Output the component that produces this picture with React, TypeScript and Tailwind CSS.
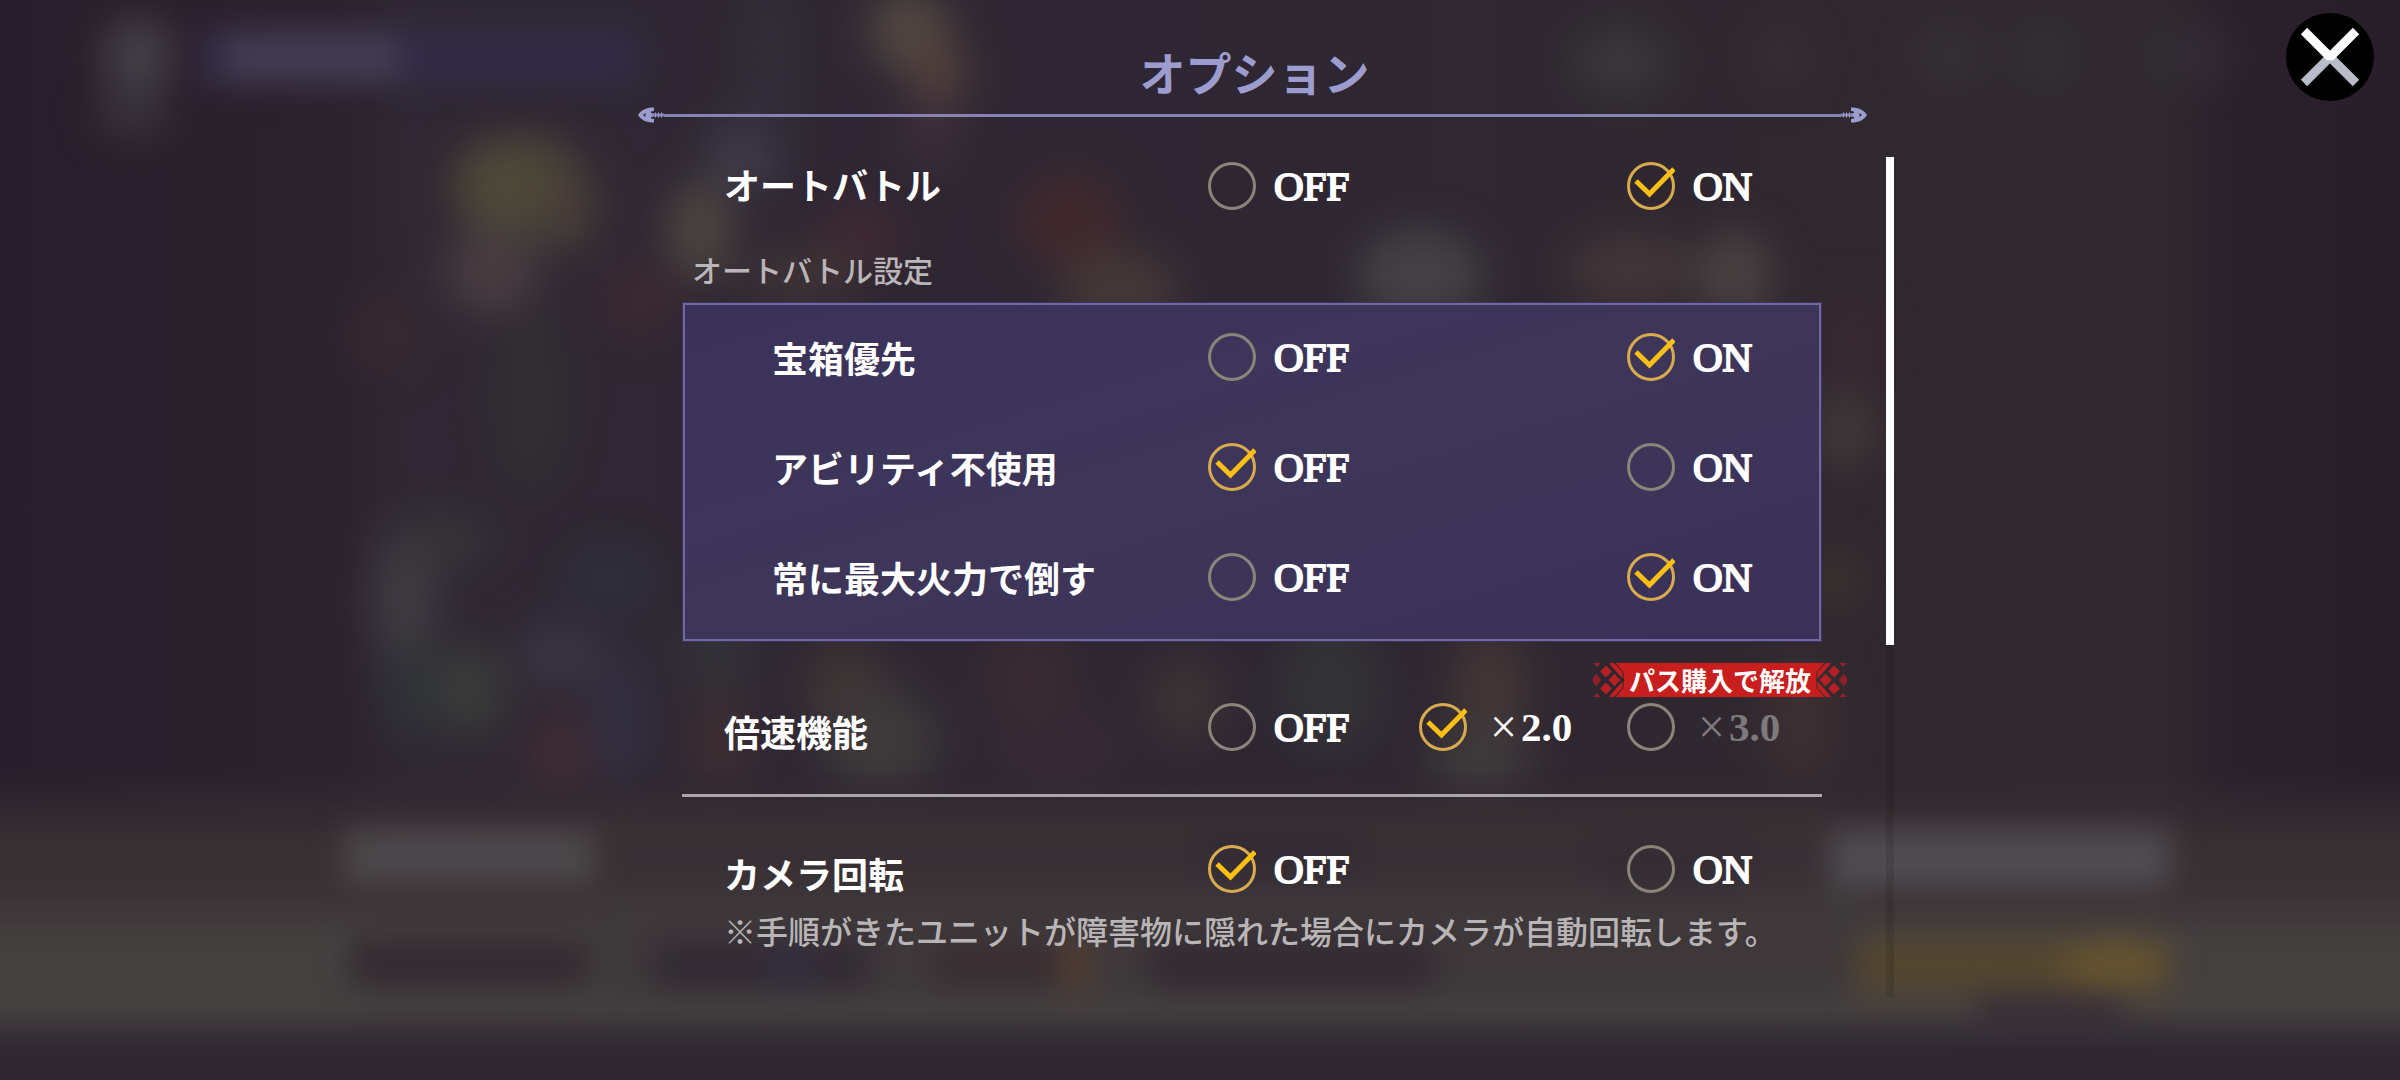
import type { ReactNode } from "react";

type Choice = { value: string; column: string; disabled?: boolean; times?: boolean };

const LATIN = "font-['Liberation_Serif','Noto_Sans_CJK_JP',serif]";
const JAPANESE = "font-['Noto_Sans_CJK_JP','Liberation_Serif',sans-serif]";

const OFF_ON: Choice[] = [
  { value: "OFF", column: "col-start-2" },
  { value: "ON", column: "col-start-4" },
];

const SPEEDS: Choice[] = [
  { value: "OFF", column: "col-start-2" },
  { value: "2.0", column: "col-start-3", times: true },
  { value: "3.0", column: "col-start-4", times: true, disabled: true },
];

const BLOBS: { x: number; y: number; rx: number; ry: number; fill: string }[] = [
  { x: 138, y: 54, rx: 36, ry: 34, fill: "#4b464d" },
  { x: 132, y: 112, rx: 38, ry: 24, fill: "#3b353d" },
  { x: 520, y: 185, rx: 70, ry: 50, fill: "#524c39" },
  { x: 572, y: 205, rx: 26, ry: 50, fill: "#4b403a" },
  { x: 492, y: 270, rx: 50, ry: 46, fill: "#4a3e42" },
  { x: 385, y: 335, rx: 34, ry: 38, fill: "#3a292f" },
  { x: 530, y: 400, rx: 34, ry: 90, fill: "#343032" },
  { x: 405, y: 600, rx: 32, ry: 84, fill: "#423e44" },
  { x: 445, y: 540, rx: 50, ry: 28, fill: "#39353a" },
  { x: 470, y: 690, rx: 38, ry: 48, fill: "#3b3d3a" },
  { x: 410, y: 690, rx: 28, ry: 48, fill: "#303539" },
  { x: 560, y: 655, rx: 44, ry: 32, fill: "#3d3646" },
  { x: 560, y: 755, rx: 32, ry: 44, fill: "#432d35" },
  { x: 620, y: 720, rx: 24, ry: 64, fill: "#353347" },
  { x: 610, y: 580, rx: 48, ry: 38, fill: "#2f2f3c" },
  { x: 640, y: 300, rx: 44, ry: 40, fill: "#3d2932" },
  { x: 700, y: 230, rx: 34, ry: 50, fill: "#4f4942" },
  { x: 745, y: 155, rx: 40, ry: 38, fill: "#423c4b" },
  { x: 770, y: 60, rx: 30, ry: 90, fill: "#322f3a" },
  { x: 910, y: 30, rx: 42, ry: 42, fill: "#564b43" },
  { x: 938, y: 74, rx: 30, ry: 40, fill: "#56433d" },
  { x: 930, y: 135, rx: 28, ry: 38, fill: "#3f2e3c" },
  { x: 860, y: 235, rx: 44, ry: 34, fill: "#412933" },
  { x: 800, y: 275, rx: 64, ry: 28, fill: "#403536" },
  { x: 1070, y: 220, rx: 56, ry: 50, fill: "#42292d" },
  { x: 1120, y: 290, rx: 60, ry: 40, fill: "#473a38" },
  { x: 1420, y: 275, rx: 64, ry: 46, fill: "#494449" },
  { x: 1630, y: 270, rx: 64, ry: 38, fill: "#443739" },
  { x: 1735, y: 275, rx: 38, ry: 44, fill: "#4d4544" },
  { x: 1620, y: 62, rx: 50, ry: 34, fill: "#3d393c" },
  { x: 1782, y: 58, rx: 26, ry: 32, fill: "#383034" },
  { x: 1950, y: 55, rx: 34, ry: 28, fill: "#383338" },
  { x: 2045, y: 55, rx: 26, ry: 28, fill: "#37323a" },
  { x: 2190, y: 55, rx: 44, ry: 28, fill: "#342d36" },
  { x: 1845, y: 430, rx: 28, ry: 40, fill: "#453c3c" },
  { x: 1850, y: 340, rx: 28, ry: 50, fill: "#3a2830" },
  { x: 1835, y: 580, rx: 20, ry: 28, fill: "#40382f" },
  { x: 720, y: 740, rx: 32, ry: 54, fill: "#402f33" },
  { x: 715, y: 655, rx: 44, ry: 34, fill: "#343339" },
  { x: 845, y: 690, rx: 44, ry: 50, fill: "#403634" },
  { x: 880, y: 740, rx: 60, ry: 54, fill: "#403b3c" },
  { x: 1030, y: 680, rx: 48, ry: 54, fill: "#3b2b32" },
  { x: 1060, y: 750, rx: 64, ry: 40, fill: "#382a35" },
  { x: 1185, y: 700, rx: 40, ry: 44, fill: "#3f3536" },
  { x: 1330, y: 690, rx: 54, ry: 64, fill: "#343438" },
  { x: 1490, y: 690, rx: 38, ry: 60, fill: "#453836" },
  { x: 1480, y: 760, rx: 54, ry: 40, fill: "#403b3d" },
  { x: 1800, y: 720, rx: 38, ry: 64, fill: "#3f3033" },
];

const BARS = [
  { x: 200, y: 28, w: 440, h: 58, fill: "#332b45" },
  { x: 225, y: 34, w: 175, h: 46, fill: "#443c52" },
  { x: 345, y: 830, w: 250, h: 54, fill: "#4d484c" },
  { x: 1830, y: 830, w: 340, h: 58, fill: "#504c51" },
  { x: 350, y: 936, w: 240, h: 54, fill: "#342c32" },
  { x: 655, y: 940, w: 215, h: 50, fill: "#332b34" },
  { x: 935, y: 942, w: 140, h: 46, fill: "#392e32" },
  { x: 1150, y: 936, w: 285, h: 56, fill: "#342c33" },
  { x: 1200, y: 830, w: 160, h: 50, fill: "#332c34" },
  { x: 1590, y: 838, w: 160, h: 50, fill: "#342d34" },
  { x: 1855, y: 938, w: 315, h: 54, fill: "#54462f" },
  { x: 1975, y: 996, w: 150, h: 30, fill: "#352b36" },
];

function Backdrop() {
  return (
    <svg
      aria-hidden="true"
      className="absolute inset-0 h-full w-full"
      viewBox="0 0 2400 1080"
      preserveAspectRatio="none"
    >
      <defs>
        <linearGradient id="base" x1="0" x2="1" y1="0" y2="0">
          <stop offset="0" stopColor="#281e2c" />
          <stop offset="0.14" stopColor="#2c222e" />
          <stop offset="0.17" stopColor="#2f2733" />
          <stop offset="0.5" stopColor="#2e2632" />
          <stop offset="0.78" stopColor="#30282f" />
          <stop offset="0.9" stopColor="#30292f" />
          <stop offset="0.93" stopColor="#2b202c" />
          <stop offset="1" stopColor="#281e2a" />
        </linearGradient>
        <linearGradient id="floor" x1="0" x2="0" y1="0" y2="1">
          <stop offset="0" stopColor="#352c32" stopOpacity="0" />
          <stop offset="0.22" stopColor="#382f33" />
          <stop offset="0.4" stopColor="#3b3235" />
          <stop offset="0.55" stopColor="#454040" />
          <stop offset="0.76" stopColor="#464140" />
          <stop offset="0.9" stopColor="#2f2733" />
          <stop offset="1" stopColor="#2e2531" />
        </linearGradient>
        <filter id="soft" x="-5%" y="-20%" width="110%" height="140%" colorInterpolationFilters="sRGB">
          <feGaussianBlur stdDeviation="21" />
        </filter>
        <filter id="softBar" x="-5%" y="-20%" width="110%" height="140%" colorInterpolationFilters="sRGB">
          <feGaussianBlur stdDeviation="15" />
        </filter>
      </defs>
      <rect width="2400" height="1080" fill="url(#base)" />
      <g filter="url(#soft)" opacity="0.9">
        {BLOBS.map((b, i) => (
          <ellipse key={i} cx={b.x} cy={b.y} rx={b.rx} ry={b.ry} fill={b.fill} />
        ))}
      </g>
      <rect y="770" width="2400" height="310" fill="url(#floor)" />
      <g filter="url(#softBar)">
        <rect x="600" y="810" width="1230" height="90" fill="#383034" />
        <rect x="600" y="890" width="1260" height="110" fill="#3e383b" />
        {BARS.map((b, i) => (
          <rect key={i} x={b.x} y={b.y} width={b.w} height={b.h} fill={b.fill} />
        ))}
        <ellipse cx="2115" cy="965" rx="54" ry="26" fill="#655330" />
        <ellipse cx="1075" cy="965" rx="16" ry="28" fill="#553f31" />
        <ellipse cx="790" cy="965" rx="26" ry="20" fill="#332d40" />
      </g>
    </svg>
  );
}

function ArrowTip({ className = "" }: { className?: string }) {
  return (
    <svg aria-hidden="true" viewBox="0 0 26 16" className={"h-4 w-[26px] shrink-0 " + className}>
      <path
        fill="#9d9ccf"
        fillRule="evenodd"
        d="M0 8C3 3 8 .5 16 .5V4L13 4.500V6L16 6.500V9.500L13 10V11.500L16 12V15.500C8 15.500 3 13 0 8ZM5 8 7.500 10V6Z"
      />
      <path fill="#8582b4" d="M14 6.500h12v3H14z" />
      <path fill="#9d9ccf" d="M17 5.500h1v5h-1zM20 5.500h1v5h-1zM23 5.500h1v5h-1z" />
    </svg>
  );
}

function BadgeEnd({ className = "" }: { className?: string }) {
  return (
    <svg aria-hidden="true" viewBox="0 0 34 34" className={"size-[34px] shrink-0 " + className}>
      <path fill="#8f2127" d="M3 11 8.500 17 3 23 0 19V15ZM0 0H8L4 4ZM0 34H8L4 30Z" />
      <path fill="#b32025" d="M13 2.500 19 8.500 13 14.500 7 8.500ZM13 19.500 19 25.500 13 31.500 7 25.500Z" />
      <path fill="#b92024" d="M21.500 11 27.500 17 21.500 23 15.500 17Z" />
      <path fill="#c11f22" d="M16 0H21L29.500 9V15.500L23 8.500ZM16 34H21L29.500 25V18.500L23 25.500Z" />
      <path fill="#c81e1e" d="M22.500 0H35V34H22.500L30.500 25V18.500L31.500 17 30.500 15.500V9Z" />
    </svg>
  );
}

function PassBadge() {
  return (
    <span className="absolute -top-[13px] -left-[34px] flex h-[34px]">
      <BadgeEnd />
      <span
        className={`${JAPANESE} bg-[#c81e1e] px-0.5 text-[26px] leading-[34px] font-bold whitespace-nowrap text-white`}
      >
        パス購入で解放
      </span>
      <BadgeEnd className="-scale-x-100" />
    </span>
  );
}

function Radio({ name, choice, checked }: { name: string; choice: Choice; checked: boolean }) {
  return (
    <label className={`${LATIN} flex items-center gap-[18px] text-[41px] leading-none text-white`}>
      <span className="relative size-12 shrink-0">
        <input
          type="radio"
          name={name}
          value={choice.value}
          defaultChecked={checked}
          disabled={choice.disabled}
          className="peer block size-12 appearance-none rounded-full border-3 border-[#8a8579] checked:border-[#d8ab4e]"
        />
        <svg
          aria-hidden="true"
          viewBox="0 0 48 48"
          className="pointer-events-none absolute inset-0 hidden size-12 peer-checked:block"
        >
          <path d="M9 19 22.500 32 47 7" fill="none" stroke="#fcc015" strokeWidth="5" />
        </svg>
      </span>
      {choice.times ? (
        <span className={choice.disabled ? "flex items-center text-[#7d797d]" : "flex items-center"}>
          <span className="w-8 text-right text-[48px]">×</span>
          <span className="pl-1 font-bold">{choice.value}</span>
        </span>
      ) : (
        <span className="[-webkit-text-stroke:2px_white]">{choice.value}</span>
      )}
    </label>
  );
}

function OptionRow({
  label,
  name,
  value,
  choices = OFF_ON,
  labelClass,
  rowClass,
  badge,
}: {
  label: string;
  name: string;
  value: string;
  choices?: Choice[];
  labelClass: string;
  rowClass: string;
  badge?: ReactNode;
}) {
  return (
    <div
      role="radiogroup"
      aria-label={label}
      className={"grid grid-cols-[526fr_211fr_208fr_195fr] items-center " + rowClass}
    >
      <span className={`${JAPANESE} text-[36px] leading-none font-bold whitespace-nowrap text-white ${labelClass}`}>
        {label}
      </span>
      {choices.map((c) => (
        <div key={c.value} className={`row-start-1 flex h-full items-center whitespace-nowrap ${c.column} ${c.disabled ? "relative" : ""}`}>
          <Radio name={name} choice={c} checked={c.value === value} />
          {c.disabled && badge}
        </div>
      ))}
    </div>
  );
}

export default function App() {
  return (
    <div className="relative min-h-screen overflow-hidden bg-[#2d2531]">
      <Backdrop />

      <button type="button" aria-label="閉じる" className="absolute top-[13px] right-[26px] z-10 size-[88px] rounded-full bg-black">
        <svg aria-hidden="true" viewBox="0 0 88 88" className="size-full">
          <path d="M18 70 44 44 70 70" fill="none" stroke="#b9bcc9" strokeWidth="9" />
          <path d="M18 18 44 44 70 18" fill="none" stroke="#fff" strokeWidth="9" strokeLinejoin="bevel" />
        </svg>
      </button>

      <main className="relative flex justify-center pt-[41px] pl-[132px]">
        <div className="w-full max-w-[1256px]">
          <header className="mr-[27px]">
            <h1 className={`${JAPANESE} mb-1 pl-1 text-center text-[46px] leading-[60px] font-bold text-[#9d9ccf]`}>
              オプション
            </h1>
            <div className="flex h-5 items-center">
              <ArrowTip />
              <div className="h-[3px] flex-1 bg-[#8582b4]" />
              <ArrowTip className="-scale-x-100" />
            </div>
          </header>

          <div className="mt-8 flex">
            <div className="ml-11 flex-1 pb-12">
              <OptionRow label="オートバトル" name="auto" value="ON" rowClass="h-[58px]" labelClass="pb-1 pl-[42px]" />

              <h2 className={`${JAPANESE} mt-8 pl-2.5 text-[30px] leading-[44px] font-medium text-[#b9b5b8]`}>
                オートバトル設定
              </h2>

              <section className="mt-[11px] bg-linear-to-br from-[#3b325b] via-[#3e3659] to-[#3a3058] pb-2.5 shadow-[inset_0_0_0_1px_#3c3163,inset_0_0_0_3px_#7268a0]">
                <OptionRow label="宝箱優先" name="chest" value="ON" rowClass="h-[110px]" labelClass="pl-[90px]" />
                <OptionRow label="アビリティ不使用" name="ability" value="OFF" rowClass="h-[110px]" labelClass="pl-[90px]" />
                <OptionRow label="常に最大火力で倒す" name="power" value="ON" rowClass="h-[110px]" labelClass="pl-[90px]" />
              </section>

              <OptionRow
                label="倍速機能"
                name="speed"
                value="2.0"
                choices={SPEEDS}
                rowClass="mt-[34px] h-[102px]"
                labelClass="pt-2 pl-[42px]"
                badge={<PassBadge />}
              />

              <hr className="mt-4 h-[3px] border-0 bg-[#aba6ab]" />

              <OptionRow label="カメラ回転" name="camera" value="OFF" rowClass="mt-[43px] h-[58px]" labelClass="pt-2 pl-[42px]" />

              <p className={`${JAPANESE} mt-3 pl-[42px] text-[32px] leading-10 font-medium whitespace-nowrap text-[#b9b5b6]`}>
                ※手順がきたユニットが障害物に隠れた場合にカメラが自動回転します。
              </p>
            </div>

            <div className="ml-16 w-2 bg-black/10">
              <div className="h-[58%] bg-white" />
            </div>
          </div>
        </div>
      </main>
    </div>
  );
}
